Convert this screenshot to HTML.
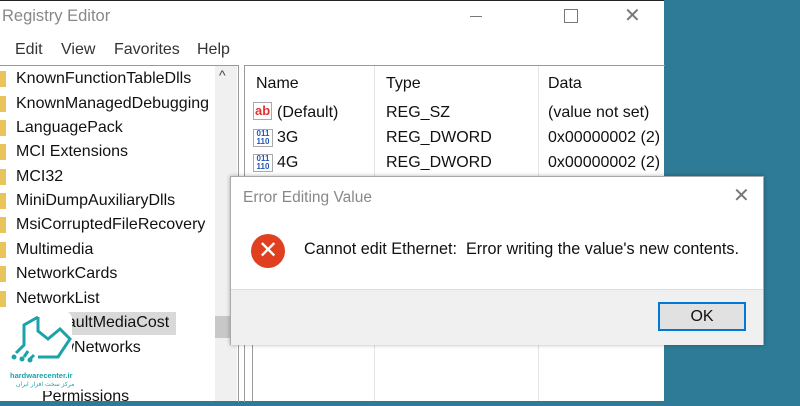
<!DOCTYPE html>
<html><head><meta charset="utf-8"><style>
body{margin:0;width:800px;height:400px;overflow:hidden;background:#2e7b97;font-family:"Liberation Sans",sans-serif;position:relative}
.win{position:absolute;left:0;top:0;width:664px;height:400px;background:#fff;border-top:1px solid #222}
.t{position:absolute;white-space:nowrap;color:#111;font-size:16px}
.fold{position:absolute;left:0;width:6px;height:16px;background:#e8c45a}
</style></head><body>
<div class="win">
<div class="t" style="left:2px;top:6px;color:#888;font-size:16.5px">Registry Editor</div>
<div style="position:absolute;left:470px;top:15px;width:12px;height:1px;background:#777"></div>
<div style="position:absolute;left:564px;top:8px;width:12px;height:12px;border:1px solid #777"></div>
<div class="t" style="left:624px;top:2px;color:#777;font-size:20px">✕</div>
<div class="t" style="left:15px;top:40px;color:#333">Edit</div>
<div class="t" style="left:61px;top:40px;color:#333">View</div>
<div class="t" style="left:114px;top:40px;color:#333">Favorites</div>
<div class="t" style="left:197px;top:40px;color:#333">Help</div>
<div style="position:absolute;left:0;top:64px;width:238px;height:336px;border-top:1px solid #999;border-right:1px solid #999"></div>
<div style="position:absolute;left:215px;top:65px;width:22px;height:335px;background:#f0f0f0"></div>
<div class="t" style="left:219px;top:66px;color:#444;font-size:14px">^</div>
<div style="position:absolute;left:215px;top:315px;width:22px;height:22px;background:#c8c8c8"></div>
<div style="position:absolute;left:244px;top:64px;width:420px;height:336px;border-top:1px solid #999;border-left:1px solid #999"></div>
<div style="position:absolute;left:374px;top:65px;width:1px;height:335px;background:#e4e4e4"></div>
<div style="position:absolute;left:538px;top:65px;width:1px;height:335px;background:#e4e4e4"></div>
<div style="position:absolute;left:252px;top:343px;width:1px;height:57px;background:#999"></div>

<div class="fold" style="top:70px"></div><div class="t" style="left:16px;top:69px">KnownFunctionTableDlls</div>
<div class="fold" style="top:95px"></div><div class="t" style="left:16px;top:94px">KnownManagedDebugging</div>
<div class="fold" style="top:119px"></div><div class="t" style="left:16px;top:118px">LanguagePack</div>
<div class="fold" style="top:143px"></div><div class="t" style="left:16px;top:142px">MCI Extensions</div>
<div class="fold" style="top:168px"></div><div class="t" style="left:16px;top:167px">MCI32</div>
<div class="fold" style="top:192px"></div><div class="t" style="left:16px;top:191px">MiniDumpAuxiliaryDlls</div>
<div class="fold" style="top:216px"></div><div class="t" style="left:16px;top:215px">MsiCorruptedFileRecovery</div>
<div class="fold" style="top:241px"></div><div class="t" style="left:16px;top:240px">Multimedia</div>
<div class="fold" style="top:265px"></div><div class="t" style="left:16px;top:264px">NetworkCards</div>
<div class="fold" style="top:290px"></div><div class="t" style="left:16px;top:289px">NetworkList</div>
<div style="position:absolute;left:12px;top:311px;width:164px;height:23px;background:#d9d9d9"></div>
<div class="t" style="left:42px;top:313px">DefaultMediaCost</div>
<div class="t" style="left:42px;top:338px">NewNetworks</div>
<div class="t" style="left:42px;top:387px">Permissions</div>

<div class="t" style="left:256px;top:74px">Name</div>
<div class="t" style="left:386px;top:74px">Type</div>
<div class="t" style="left:548px;top:74px">Data</div>
<div class="t" style="left:253px;top:101px;color:#d33;font-weight:bold;font-size:13px;border:1px solid #aaa;padding:0 1px;line-height:16px">ab</div>
<div class="t" style="left:277px;top:103px">(Default)</div>
<div class="t" style="left:386px;top:103px">REG_SZ</div>
<div class="t" style="left:548px;top:103px">(value not set)</div>
<div class="t" style="left:253px;top:128px;color:#2255bb;font-size:8px;line-height:8px;border:1px solid #aaa;width:18px;text-align:center;font-weight:bold">011<br>110</div>
<div class="t" style="left:277px;top:128px">3G</div>
<div class="t" style="left:386px;top:128px">REG_DWORD</div>
<div class="t" style="left:548px;top:128px">0x00000002 (2)</div>
<div class="t" style="left:253px;top:153px;color:#2255bb;font-size:8px;line-height:8px;border:1px solid #aaa;width:18px;text-align:center;font-weight:bold">011<br>110</div>
<div class="t" style="left:277px;top:153px">4G</div>
<div class="t" style="left:386px;top:153px">REG_DWORD</div>
<div class="t" style="left:548px;top:153px">0x00000002 (2)</div>
</div>

<div style="position:absolute;left:230px;top:176px;width:532px;height:167px;background:#fff;border:1px solid #aaa;box-shadow:0 0 4px rgba(0,0,0,.3)">
<div class="t" style="left:12px;top:12px;color:#888;font-size:15.5px">Error Editing Value</div>
<div class="t" style="left:502px;top:6px;color:#777;font-size:20px">✕</div>
<div style="position:absolute;left:20px;top:57px;width:34px;height:34px;border-radius:50%;background:#e0401f;color:#fff;font-size:24px;text-align:center;line-height:34px">✕</div>
<div class="t" style="left:73px;top:63px;font-size:16.2px">Cannot edit Ethernet:&nbsp; Error writing the value's new contents.</div>
<div style="position:absolute;left:0;top:112px;width:532px;height:55px;background:#f0f0f0;border-top:1px solid #ddd"></div>
<div style="position:absolute;left:427px;top:125px;width:84px;height:25px;background:#e1e1e1;border:2px solid #0078d7;text-align:center;line-height:25px;font-size:16px;color:#111">OK</div>
</div>

<div style="position:absolute;left:8px;top:311px;width:64px;height:80px;background:#fff;border-radius:8px">
<svg width="64" height="60" viewBox="0 0 64 60" style="position:absolute;left:0;top:0">
<g fill="none" stroke="#1aa3a8" stroke-width="3">
<path d="M30 6 L16 14 L16 34 L8 42"/><path d="M30 6 L30 20 L40 28 L52 18 L62 28 L50 46 L30 46"/>
<path d="M20 40 L16 46"/><path d="M26 44 L22 48"/></g>
<circle cx="6" cy="46" r="2.5" fill="#1aa3a8"/><circle cx="14" cy="48" r="2.5" fill="#1aa3a8"/><circle cx="22" cy="49" r="2.5" fill="#1aa3a8"/>
</svg>
<div style="position:absolute;left:2px;top:60px;font-size:7.5px;color:#1aa3a8;font-weight:bold;white-space:nowrap">hardwarecenter.ir</div>
<div style="position:absolute;left:8px;top:70px;font-size:6px;color:#1aa3a8;white-space:nowrap;font-family:'DejaVu Sans',sans-serif">مرکز سخت افزار ایران</div>
</div>
</body></html>
